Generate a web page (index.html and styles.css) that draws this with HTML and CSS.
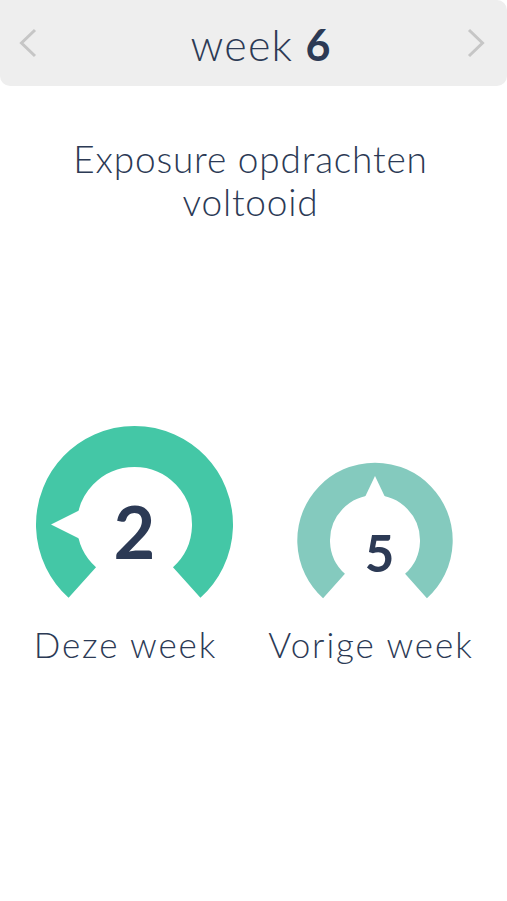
FILE: index.html
```html
<!DOCTYPE html>
<html lang="nl">
<head>
<meta charset="utf-8">
<title>Exposure</title>
<link rel="stylesheet" href="styles.css">
</head>
<body>
<div class="page">
  <header class="weekbar">
    <svg class="chev" width="18" height="30" viewBox="0 0 18 30"><polyline points="16,2 2.5,15 16,28" /></svg>
    <div class="week"><span class="week-label">week</span> <b class="week-num">6</b></div>
    <svg class="chev" width="18" height="30" viewBox="0 0 18 30"><polyline points="2,2 15.5,15 2,28" /></svg>
  </header>

  <h1 class="title">Exposure opdrachten<br>voltooid</h1>

  <div class="gauges">
    <div class="gauge gauge-now">
      <svg class="dial" width="183" height="180" viewBox="0 0 183 180">
        <path class="arc arc-now" d="M48.3 162.5 A78 78 0 1 1 152.7 162.5" />
        <polygon class="needle" points="17,104.5 62,82 62,127" />
        <text class="num num-now" x="100.5" y="139">2</text>
      </svg>
      <div class="label">Deze week</div>
    </div>
    <div class="gauge gauge-prev">
      <svg class="dial" width="204" height="180" viewBox="0 0 204 180">
        <path class="arc arc-prev" d="M65 166 A61.35 61.35 0 1 1 147 166" />
        <polygon class="needle" points="106,56 89.8,90 122.2,90" />
        <text class="num num-prev" x="110.5" y="151.7">5</text>
      </svg>
      <div class="label">Vorige week</div>
    </div>
  </div>
</div>
</body>
</html>
```
FILE: styles.css
```css
html, body {
  margin: 0;
  padding: 0;
  background: #ffffff;
}
body {
  font-family: "Lato", "Noto Sans", sans-serif;
  color: #2c3a55;
}
.page {
  width: 507px;
  min-height: 901px;
}
.weekbar {
  height: 86px;
  background: #eeeeee;
  border-radius: 0 10px 10px 10px;
  display: flex;
  align-items: center;
  justify-content: space-between;
  padding: 0 22px 0 19px;
  box-sizing: border-box;
}
.chev {
  display: block;
}
.chev polyline {
  fill: none;
  stroke: #c6c6c6;
  stroke-width: 3;
}
.week {
  font-size: 43px;
  line-height: 1;
  margin-top: 2px;
  margin-left: 18px;
  letter-spacing: 1.2px;
}
.week-label {
  font-weight: 300;
}
.week-num {
  font-weight: 700;
}
.title {
  margin: 51px 0 0;
  font-size: 37px;
  line-height: 43px;
  font-weight: 300;
  letter-spacing: 0.8px;
  text-align: center;
  padding-right: 6px;
}
.gauges {
  display: flex;
  justify-content: center;
  gap: 52px;
  margin-top: 197px;
}
.gauge {
  display: flex;
  flex-direction: column;
  align-items: center;
}
.gauge-now {
  width: 183px;
}
.gauge-prev {
  width: 204px;
}
.dial {
  display: block;
  overflow: visible;
}
.arc {
  fill: none;
}
.arc-now {
  stroke: #44c7a6;
  stroke-width: 41;
}
.arc-prev {
  stroke: #84cabe;
  stroke-width: 32.7;
}
.needle {
  fill: #ffffff;
}
.num {
  font-family: "Lato", "Noto Sans", sans-serif;
  font-weight: 700;
  fill: #2c3a55;
  text-anchor: middle;
}
.num-now {
  font-size: 72px;
}
.num-prev {
  font-size: 51px;
}
.label {
  margin-top: 22px;
  font-size: 35px;
  line-height: 44px;
  font-weight: 300;
  letter-spacing: 1.9px;
  white-space: nowrap;
}
```
